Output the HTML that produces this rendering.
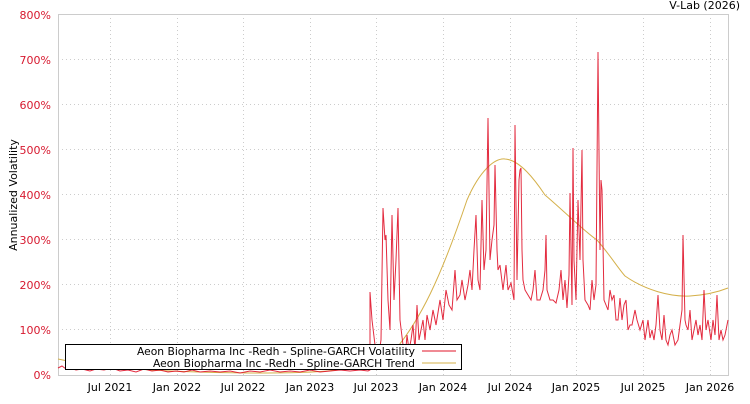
<!DOCTYPE html>
<html><head><style>
body{margin:0;background:#fff;width:750px;height:400px;overflow:hidden;font-family:"DejaVu Sans","Liberation Sans",sans-serif}
</style></head><body>
<svg width="750" height="400" xmlns="http://www.w3.org/2000/svg" font-family="DejaVu Sans, Liberation Sans, sans-serif" font-size="11">
<rect width="750" height="400" fill="#fff"/>
<g stroke="#ccc" stroke-dasharray="1,3" stroke-width="1">
<line x1="58" y1="59.5" x2="728" y2="59.5"/><line x1="58" y1="104.5" x2="728" y2="104.5"/>
<line x1="58" y1="149.5" x2="728" y2="149.5"/><line x1="58" y1="194.5" x2="728" y2="194.5"/>
<line x1="58" y1="239.5" x2="728" y2="239.5"/><line x1="58" y1="284.5" x2="728" y2="284.5"/>
<line x1="58" y1="329.5" x2="728" y2="329.5"/>
<line x1="110.5" y1="14" x2="110.5" y2="375"/><line x1="177.5" y1="14" x2="177.5" y2="375"/>
<line x1="243.5" y1="14" x2="243.5" y2="375"/><line x1="310.5" y1="14" x2="310.5" y2="375"/>
<line x1="376.5" y1="14" x2="376.5" y2="375"/><line x1="443.5" y1="14" x2="443.5" y2="375"/>
<line x1="510.5" y1="14" x2="510.5" y2="375"/><line x1="576.5" y1="14" x2="576.5" y2="375"/>
<line x1="643.5" y1="14" x2="643.5" y2="375"/><line x1="710.5" y1="14" x2="710.5" y2="375"/>
</g>
<rect x="58.5" y="14.5" width="670" height="361" fill="none" stroke="#ccc"/>
<g fill="#d7192f" text-anchor="end">
<text x="51" y="19">800%</text><text x="51" y="64">700%</text><text x="51" y="109">600%</text>
<text x="51" y="154">500%</text><text x="51" y="199">400%</text><text x="51" y="244">300%</text>
<text x="51" y="289">200%</text><text x="51" y="334">100%</text><text x="51" y="379">0%</text>
</g>
<g fill="#000" text-anchor="middle">
<text x="110" y="391">Jul 2021</text><text x="177" y="391">Jan 2022</text><text x="243" y="391">Jul 2022</text>
<text x="310" y="391">Jan 2023</text><text x="376" y="391">Jul 2023</text><text x="443" y="391">Jan 2024</text>
<text x="510" y="391">Jul 2024</text><text x="576" y="391">Jan 2025</text><text x="643" y="391">Jul 2025</text>
<text x="710" y="391">Jan 2026</text>
</g>
<text x="740" y="9" text-anchor="end">V-Lab (2026)</text>
<text transform="translate(17,195) rotate(-90)" text-anchor="middle">Annualized Volatility</text>
<path fill="none" stroke="#d4b04a" stroke-width="1" d="M58,359 C90,366 150,372 250,373 C320,373 370,372 395,350 C420,320 440,280 467,200 C480,170 495,158 505,159 C520,160 535,180 545,195 C565,212 585,232 597,240 C610,255 618,268 625,276 C645,290 670,297 690,296 C705,295 718,292 728,288"/>
<path fill="none" stroke="#e0142a" stroke-width="1" stroke-opacity="0.9" d="M58,368 L62,366 L66,369 L70,368 L76,370 L82,369 L90,371 L96,369 L104,370 L112,368 L120,371 L128,370 L136,372 L144,369 L152,371 L160,370 L168,372 L176,371 L184,372 L192,370 L200,372 L210,371 L220,372 L230,371 L240,373 L250,371 L260,372 L270,370 L280,372 L290,371 L300,372 L310,370 L320,372 L330,371 L340,370 L350,371 L360,370 L368,371 L370,370 L370,292 L372,320 L375,345 L378,360 L381,340 L383,208 L385,240 L386,235 L388,300 L390,330 L392,215 L394,300 L396,260 L398,208 L400,320 L403,345 L405,360 L407,335 L409,350 L411,340 L413,325 L415,350 L417,305 L419,340 L421,330 L423,320 L425,340 L427,315 L430,330 L433,310 L436,325 L440,300 L443,320 L446,290 L449,305 L452,310 L455,270 L457,300 L460,295 L462,280 L465,300 L468,285 L470,270 L472,290 L474,250 L476,215 L478,280 L480,290 L482,200 L484,270 L486,250 L488,118 L490,260 L492,240 L494,225 L495,165 L497,250 L498,270 L500,265 L503,290 L506,265 L508,290 L511,283 L514,300 L515,125 L517,280 L519,180 L520,170 L521,168 L522,250 L523,280 L525,290 L528,295 L531,300 L533,290 L535,270 L537,300 L540,300 L543,290 L545,270 L546,235 L547,290 L550,300 L553,300 L556,303 L559,290 L561,270 L563,300 L565,280 L567,308 L569,275 L570,193 L572,305 L573,148 L574,260 L576,300 L578,200 L580,260 L582,150 L583,260 L585,300 L588,305 L590,310 L592,280 L594,300 L596,285 L598,52 L600,250 L601,180 L602,190 L604,300 L606,305 L608,310 L610,290 L612,300 L614,295 L616,320 L618,320 L620,298 L622,320 L624,305 L626,300 L628,330 L630,325 L632,325 L635,310 L637,320 L640,330 L643,320 L645,340 L648,320 L650,338 L652,330 L654,340 L656,325 L658,295 L660,330 L662,340 L664,315 L666,340 L668,345 L670,335 L672,330 L675,345 L678,340 L680,325 L682,310 L683,235 L685,320 L686,325 L688,330 L690,310 L692,340 L694,330 L696,320 L698,335 L700,325 L702,340 L704,290 L706,330 L708,320 L711,340 L713,320 L715,335 L717,295 L719,340 L721,330 L723,340 L725,335 L727,325 L728,320"/>
<rect x="65.5" y="344.5" width="396" height="25" fill="#fff" stroke="#000"/>
<text x="137" y="355" textLength="278" lengthAdjust="spacingAndGlyphs">Aeon Biopharma Inc -Redh - Spline-GARCH Volatility</text>
<text x="153" y="367" textLength="262" lengthAdjust="spacingAndGlyphs">Aeon Biopharma Inc -Redh - Spline-GARCH Trend</text>
<line x1="422" y1="351" x2="456" y2="351" stroke="#e0142a"/>
<line x1="422" y1="363" x2="456" y2="363" stroke="#d4b04a"/>
</svg>
</body></html>
